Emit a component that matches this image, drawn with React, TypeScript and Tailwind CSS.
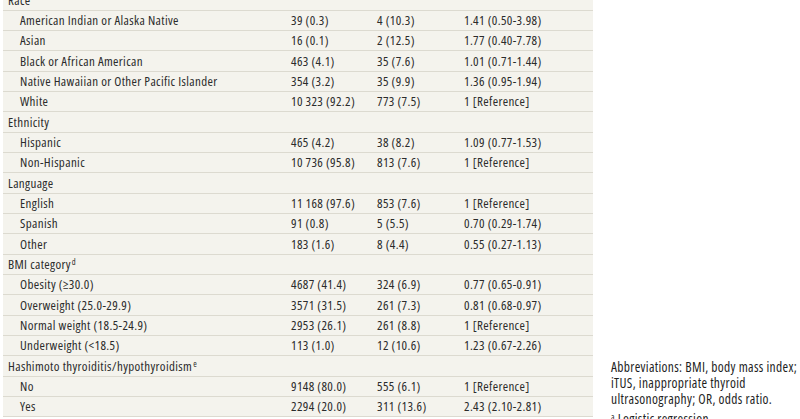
import React, { FC } from "react";

/* TYPES */
interface RowShape {
  label: string;
  total: string;
  itus: string;
  or: string;
}
interface SectionShape {
  title: string;
  sup?: string;
  rows: RowShape[];
}

/* DATA */
const Sections: SectionShape[] = [
  {
    title: "Race",
    rows: [
      { label: "American Indian or Alaska Native", total: "39 (0.3)", itus: "4 (10.3)", or: "1.41 (0.50-3.98)" },
      { label: "Asian", total: "16 (0.1)", itus: "2 (12.5)", or: "1.77 (0.40-7.78)" },
      { label: "Black or African American", total: "463 (4.1)", itus: "35 (7.6)", or: "1.01 (0.71-1.44)" },
      { label: "Native Hawaiian or Other Pacific Islander", total: "354 (3.2)", itus: "35 (9.9)", or: "1.36 (0.95-1.94)" },
      { label: "White", total: "10 323 (92.2)", itus: "773 (7.5)", or: "1 [Reference]" },
    ],
  },
  {
    title: "Ethnicity",
    rows: [
      { label: "Hispanic", total: "465 (4.2)", itus: "38 (8.2)", or: "1.09 (0.77-1.53)" },
      { label: "Non-Hispanic", total: "10 736 (95.8)", itus: "813 (7.6)", or: "1 [Reference]" },
    ],
  },
  {
    title: "Language",
    rows: [
      { label: "English", total: "11 168 (97.6)", itus: "853 (7.6)", or: "1 [Reference]" },
      { label: "Spanish", total: "91 (0.8)", itus: "5 (5.5)", or: "0.70 (0.29-1.74)" },
      { label: "Other", total: "183 (1.6)", itus: "8 (4.4)", or: "0.55 (0.27-1.13)" },
    ],
  },
  {
    title: "BMI category",
    sup: "d",
    rows: [
      { label: "Obesity (≥30.0)", total: "4687 (41.4)", itus: "324 (6.9)", or: "0.77 (0.65-0.91)" },
      { label: "Overweight (25.0-29.9)", total: "3571 (31.5)", itus: "261 (7.3)", or: "0.81 (0.68-0.97)" },
      { label: "Normal weight (18.5-24.9)", total: "2953 (26.1)", itus: "261 (8.8)", or: "1 [Reference]" },
      { label: "Underweight (<18.5)", total: "113 (1.0)", itus: "12 (10.6)", or: "1.23 (0.67-2.26)" },
    ],
  },
  {
    title: "Hashimoto thyroiditis/hypothyroidism",
    sup: "e",
    rows: [
      { label: "No", total: "9148 (80.0)", itus: "555 (6.1)", or: "1 [Reference]" },
      { label: "Yes", total: "2294 (20.0)", itus: "311 (13.6)", or: "2.43 (2.10-2.81)" },
    ],
  },
];

const rowCls =
  "grid grid-cols-[283px_86px_86px_1fr] items-center h-[20.33px] border-b border-[#dcdad0]";

/* COMPONENTS */
const SectionRows: FC<{ Section: SectionShape }> = ({ Section }) => (
  <>
    <div className={rowCls}>
      <div className="pl-[5px]">
        {Section.title}
        {Section.sup && (
          <span className="relative -top-[4px] ml-[1px] text-[8.5px]">{Section.sup}</span>
        )}
      </div>
    </div>
    {Section.rows.map((r, i) => (
      <div key={i} className={rowCls}>
        <div className="pl-[17px]">{r.label}</div>
        <div className="pl-[5px]">{r.total}</div>
        <div className="pl-[5px]">{r.itus}</div>
        <div className="pl-[6px]">{r.or}</div>
      </div>
    ))}
  </>
);

export default function App() {
  return (
    <div
      className="w-[800px] h-[419px] overflow-hidden bg-white flex leading-none text-[#2b2b2b] font-[450] font-stretch-[75%]"
      style={{ fontFamily: '"Open Sans", "Liberation Sans", sans-serif' }}
    >
      <div className="ml-[3px] w-[590px] shrink-0 bg-[#f4f3ed] -mt-[9.5px] self-start text-[13px] tracking-[0.36px]">
        {Sections.map((s, i) => (
          <SectionRows key={i} Section={s} />
        ))}
      </div>
      <div className="ml-[18px] w-[187px] shrink-0 pt-[359px] text-[#1f1f1f] text-[13.5px] tracking-[0.32px] leading-[16px]">
        <p>
          Abbreviations: BMI, body mass index; iTUS, inappropriate thyroid
          ultrasonography; OR, odds ratio.
        </p>
        <p className="mt-[4px]">
          <span className="relative -top-[4px] text-[8.5px]">a</span> Logistic regression.
        </p>
      </div>
    </div>
  );
}
